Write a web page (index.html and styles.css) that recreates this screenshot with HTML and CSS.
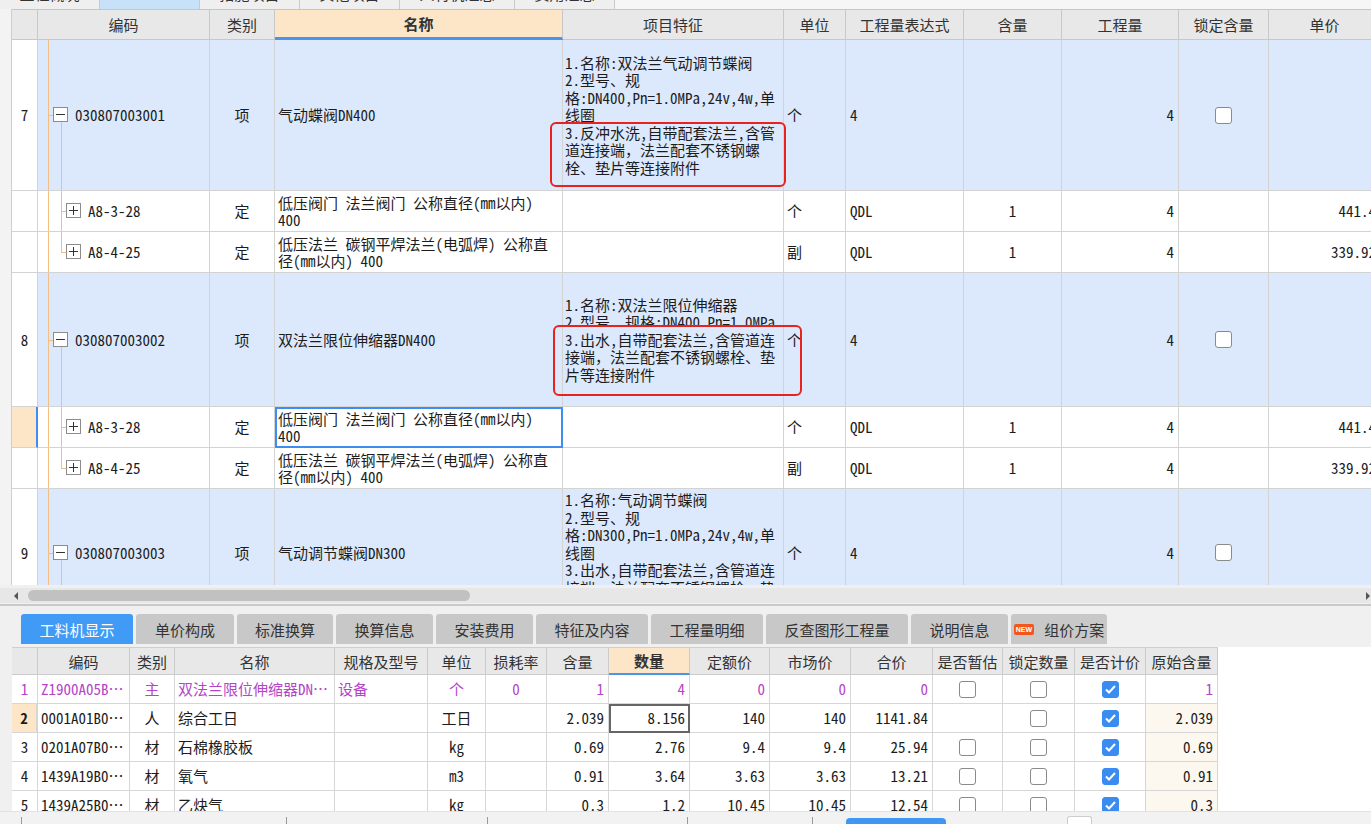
FILE: index.html
```html
<!DOCTYPE html>
<html lang="zh-CN">
<head>
<meta charset="utf-8">
<title>分部分项</title>
<link rel="stylesheet" href="styles.css">
</head>
<body>
<div class="toptabs">
  <div class="ttab"><span>工程概况</span></div>
  <div class="ttab on"><span>分部分项</span></div>
  <div class="ttab"><span>措施项目</span></div>
  <div class="ttab"><span>其他项目</span></div>
  <div class="ttab w115"><span>人材机汇总</span></div>
  <div class="ttab"><span>费用汇总</span></div>
</div>

<div class="upper">
  <div class="side"></div>
  <div class="grid">
    <div class="row head">
      <div class="c"></div>
      <div class="c">编码</div>
      <div class="c">类别</div>
      <div class="c hl-col">名称</div>
      <div class="c">项目特征</div>
      <div class="c">单位</div>
      <div class="c">工程量表达式</div>
      <div class="c">含量</div>
      <div class="c">工程量</div>
      <div class="c">锁定含量</div>
      <div class="c">单价</div>
    </div>

    <div class="row d item h151">
      <div class="c rn">7</div>
      <div class="c code"><i class="vl"></i><i class="hz"></i><i class="bx"></i><i class="vk down"></i>030807003001</div>
      <div class="c ctr">项</div>
      <div class="c">气动蝶阀DN400</div>
      <div class="c ft"><div>1.名称:双法兰气动调节蝶阀<br>2.型号、规<br>格:DN400,Pn=1.0MPa,24v,4w,单<br>线圈<br>3.反冲水洗,自带配套法兰,含管<br>道连接端，法兰配套不锈钢螺<br>栓、垫片等连接附件</div></div>
      <div class="c">个</div>
      <div class="c px">4</div>
      <div class="c"></div>
      <div class="c rt">4</div>
      <div class="c ctr"><span class="cb"></span></div>
      <div class="c"></div>
    </div>

    <div class="row d sub h41">
      <div class="c rn"></div>
      <div class="c code"><i class="vl"></i><i class="vk full"></i><i class="hz"></i><i class="bx plus"></i>A8-3-28</div>
      <div class="c ctr">定</div>
      <div class="c"><div>低压阀门 法兰阀门 公称直径(mm以内)<br>400</div></div>
      <div class="c"></div>
      <div class="c">个</div>
      <div class="c px">QDL</div>
      <div class="c ctr">1</div>
      <div class="c rt">4</div>
      <div class="c"></div>
      <div class="c rt">441.4</div>
    </div>

    <div class="row d sub h41">
      <div class="c rn"></div>
      <div class="c code"><i class="vl"></i><i class="vk half"></i><i class="hz"></i><i class="bx plus"></i>A8-4-25</div>
      <div class="c ctr">定</div>
      <div class="c"><div>低压法兰 碳钢平焊法兰(电弧焊) 公称直<br>径(mm以内) 400</div></div>
      <div class="c"></div>
      <div class="c">副</div>
      <div class="c px">QDL</div>
      <div class="c ctr">1</div>
      <div class="c rt">4</div>
      <div class="c"></div>
      <div class="c rt">339.92</div>
    </div>

    <div class="row d item h134">
      <div class="c rn">8</div>
      <div class="c code"><i class="vl"></i><i class="hz"></i><i class="bx"></i><i class="vk down"></i>030807003002</div>
      <div class="c ctr">项</div>
      <div class="c">双法兰限位伸缩器DN400</div>
      <div class="c ft"><div>1.名称:双法兰限位伸缩器<div class="clip">2.型号、规格:DN400,Pn=1.0MPa</div>3.出水,自带配套法兰,含管道连<br>接端，法兰配套不锈钢螺栓、垫<br>片等连接附件</div></div>
      <div class="c">个</div>
      <div class="c px">4</div>
      <div class="c"></div>
      <div class="c rt">4</div>
      <div class="c ctr"><span class="cb"></span></div>
      <div class="c"></div>
    </div>

    <div class="row d sub h41">
      <div class="c rn sel"></div>
      <div class="c code"><i class="vl"></i><i class="vk full"></i><i class="hz"></i><i class="bx plus"></i>A8-3-28</div>
      <div class="c ctr">定</div>
      <div class="c cur"><div>低压阀门 法兰阀门 公称直径(mm以内)<br>400</div></div>
      <div class="c"></div>
      <div class="c">个</div>
      <div class="c px">QDL</div>
      <div class="c ctr">1</div>
      <div class="c rt">4</div>
      <div class="c"></div>
      <div class="c rt">441.4</div>
    </div>

    <div class="row d sub h41">
      <div class="c rn"></div>
      <div class="c code"><i class="vl"></i><i class="vk half"></i><i class="hz"></i><i class="bx plus"></i>A8-4-25</div>
      <div class="c ctr">定</div>
      <div class="c"><div>低压法兰 碳钢平焊法兰(电弧焊) 公称直<br>径(mm以内) 400</div></div>
      <div class="c"></div>
      <div class="c">副</div>
      <div class="c px">QDL</div>
      <div class="c ctr">1</div>
      <div class="c rt">4</div>
      <div class="c"></div>
      <div class="c rt">339.92</div>
    </div>

    <div class="row d item h128">
      <div class="c rn">9</div>
      <div class="c code"><i class="vl"></i><i class="hz"></i><i class="bx"></i><i class="vk down"></i>030807003003</div>
      <div class="c ctr">项</div>
      <div class="c">气动调节蝶阀DN300</div>
      <div class="c ft"><div>1.名称:气动调节蝶阀<br>2.型号、规<br>格:DN300,Pn=1.0MPa,24v,4w,单<br>线圈<br>3.出水,自带配套法兰,含管道连<br>接端，法兰配套不锈钢螺栓、垫<br>片等连接附件</div></div>
      <div class="c">个</div>
      <div class="c px">4</div>
      <div class="c"></div>
      <div class="c rt">4</div>
      <div class="c ctr"><span class="cb"></span></div>
      <div class="c"></div>
    </div>

    <div class="rbox rb1"></div>
    <div class="rbox rb2"></div>
  </div>
</div>

<div class="hscroll">
  <div class="track">
    <span class="arr-l"></span>
    <span class="thumb"></span>
    <span class="arr-r"></span>
  </div>
</div>

<div class="lower">
  <div class="btabs">
    <div class="bt on w112">工料机显示</div>
    <div class="bt w98">单价构成</div>
    <div class="bt w96">标准换算</div>
    <div class="bt w97">换算信息</div>
    <div class="bt w97">安装费用</div>
    <div class="bt w112">特征及内容</div>
    <div class="bt w112">工程量明细</div>
    <div class="bt w142">反查图形工程量</div>
    <div class="bt w97">说明信息</div>
    <div class="bt w96"><span class="new">NEW</span>组价方案</div>
  </div>

  <div class="bwrap">
    <div class="bside"></div>
    <div class="btable">
      <div class="brow bhead">
        <div class="c"></div>
        <div class="c">编码</div>
        <div class="c">类别</div>
        <div class="c">名称</div>
        <div class="c">规格及型号</div>
        <div class="c">单位</div>
        <div class="c">损耗率</div>
        <div class="c">含量</div>
        <div class="c hl-col">数量</div>
        <div class="c">定额价</div>
        <div class="c">市场价</div>
        <div class="c">合价</div>
        <div class="c">是否暂估</div>
        <div class="c">锁定数量</div>
        <div class="c">是否计价</div>
        <div class="c">原始含量</div>
      </div>

      <div class="brow d main">
        <div class="c rn">1</div>
        <div class="c">Z1900A05B…</div>
        <div class="c ctr">主</div>
        <div class="c">双法兰限位伸缩器DN…</div>
        <div class="c">设备</div>
        <div class="c ctr">个</div>
        <div class="c ctr">0</div>
        <div class="c rt">1</div>
        <div class="c rt">4</div>
        <div class="c rt">0</div>
        <div class="c rt">0</div>
        <div class="c rt">0</div>
        <div class="c ctr"><span class="cb"></span></div>
        <div class="c ctr"><span class="cb"></span></div>
        <div class="c ctr"><span class="cb on"><svg viewBox="0 0 15 15" width="15" height="15"><path d="M3 7.5l3 3 6-6.5" fill="none" stroke="#fff" stroke-width="2"/></svg></span></div>
        <div class="c rt">1</div>
      </div>

      <div class="brow d">
        <div class="c rn sel">2</div>
        <div class="c">0001A01B0…</div>
        <div class="c ctr">人</div>
        <div class="c">综合工日</div>
        <div class="c"></div>
        <div class="c ctr">工日</div>
        <div class="c"></div>
        <div class="c rt">2.039</div>
        <div class="c rt cursel">8.156</div>
        <div class="c rt">140</div>
        <div class="c rt">140</div>
        <div class="c rt">1141.84</div>
        <div class="c ctr"></div>
        <div class="c ctr"><span class="cb"></span></div>
        <div class="c ctr"><span class="cb on"><svg viewBox="0 0 15 15" width="15" height="15"><path d="M3 7.5l3 3 6-6.5" fill="none" stroke="#fff" stroke-width="2"/></svg></span></div>
        <div class="c rt cream">2.039</div>
      </div>

      <div class="brow d">
        <div class="c rn">3</div>
        <div class="c">0201A07B0…</div>
        <div class="c ctr">材</div>
        <div class="c">石棉橡胶板</div>
        <div class="c"></div>
        <div class="c ctr">kg</div>
        <div class="c"></div>
        <div class="c rt">0.69</div>
        <div class="c rt">2.76</div>
        <div class="c rt">9.4</div>
        <div class="c rt">9.4</div>
        <div class="c rt">25.94</div>
        <div class="c ctr"><span class="cb"></span></div>
        <div class="c ctr"><span class="cb"></span></div>
        <div class="c ctr"><span class="cb on"><svg viewBox="0 0 15 15" width="15" height="15"><path d="M3 7.5l3 3 6-6.5" fill="none" stroke="#fff" stroke-width="2"/></svg></span></div>
        <div class="c rt cream">0.69</div>
      </div>

      <div class="brow d">
        <div class="c rn">4</div>
        <div class="c">1439A19B0…</div>
        <div class="c ctr">材</div>
        <div class="c">氧气</div>
        <div class="c"></div>
        <div class="c ctr">m3</div>
        <div class="c"></div>
        <div class="c rt">0.91</div>
        <div class="c rt">3.64</div>
        <div class="c rt">3.63</div>
        <div class="c rt">3.63</div>
        <div class="c rt">13.21</div>
        <div class="c ctr"><span class="cb"></span></div>
        <div class="c ctr"><span class="cb"></span></div>
        <div class="c ctr"><span class="cb on"><svg viewBox="0 0 15 15" width="15" height="15"><path d="M3 7.5l3 3 6-6.5" fill="none" stroke="#fff" stroke-width="2"/></svg></span></div>
        <div class="c rt cream">0.91</div>
      </div>

      <div class="brow d">
        <div class="c rn">5</div>
        <div class="c">1439A25B0…</div>
        <div class="c ctr">材</div>
        <div class="c">乙炔气</div>
        <div class="c"></div>
        <div class="c ctr">kg</div>
        <div class="c"></div>
        <div class="c rt">0.3</div>
        <div class="c rt">1.2</div>
        <div class="c rt">10.45</div>
        <div class="c rt">10.45</div>
        <div class="c rt">12.54</div>
        <div class="c ctr"><span class="cb"></span></div>
        <div class="c ctr"><span class="cb"></span></div>
        <div class="c ctr"><span class="cb on"><svg viewBox="0 0 15 15" width="15" height="15"><path d="M3 7.5l3 3 6-6.5" fill="none" stroke="#fff" stroke-width="2"/></svg></span></div>
        <div class="c rt cream">0.3</div>
      </div>
    </div>
  </div>

  <div class="status">
    <span class="sp s1"></span>
    <span class="sp s2"></span>
    <span class="sp s3"></span>
    <span class="sp s4"></span>
    <span class="sp s5"></span>
    <span class="pill"></span>
    <span class="wb"></span>
  </div>
</div>
</body>
</html>
```

FILE: styles.css
```css
* { box-sizing: border-box; margin: 0; padding: 0; }
html, body { width: 1371px; height: 824px; overflow: hidden; }
body {
  background: #f0f0f0;
  font-family: "Noto Sans CJK SC", "Noto Sans", sans-serif;
  color: #222;
}

/* top tab strip (mostly scrolled out of view) */
.toptabs { height: 9px; display: flex; overflow: hidden; background: #f6f6f6; }
.ttab {
  flex: none; width: 100px; height: 9px; overflow: hidden;
  border-right: 1px solid #c9c9c9; background: #efefef;
  font-size: 15px; line-height: 20px; text-align: center; color: #333;
}
.ttab span { display: block; margin-top: -16px; }
.ttab.w115 { width: 115px; }
.ttab.on { background: #c7e2f8; }
.ttab.on span { margin-top: -22px; }

/* upper grid */
.upper { display: flex; height: 576px; }
.side { width: 12px; flex: none; background: #f3f3f3; border-right: 1px solid #cfcfcf; }
.grid { flex: 1; min-width: 0; overflow: hidden; position: relative; background: #f0f0f0; }

.row {
  display: grid;
  grid-template-columns: 26px 172px 65px 288px 221px 62px 118px 98px 117px 90px 112px;
  width: 1369px;
}
.c {
  display: flex; align-items: center; min-width: 0;
  border-right: 1px solid #d3d3d3; border-bottom: 1px solid #d3d3d3;
  padding: 0 3px; overflow: hidden; white-space: nowrap;
}
.head { height: 31px; border-top: 1px solid #c6c6c6; background: #e8e8e8; }
.head .c { justify-content: center; font-size: 15px; color: #333; border-color: #c8c8c8; }
.hl-col { background: #fde6c8; font-weight: bold; border-bottom: 3px solid #4a94ec !important; }

.d {
  font-family: "Noto Sans Mono CJK SC", "Noto Sans CJK SC", monospace;
  font-size: 15px; line-height: 17.5px; color: #1c1c1c;
}
.item { background: #dce9fc; }
.sub { background: #fff; }
.h151 { height: 151px; }
.h134 { height: 134px; }
.h128 { height: 128px; }
.h41 { height: 41px; }

.rn { justify-content: center; background: #fff; padding: 0; }
.rn.sel { background: #fde6c8; border-right: 2px solid #3d8ef0; font-weight: bold; }
.ctr { justify-content: center; }
.rt { justify-content: flex-end; padding-right: 4px; }
.px { padding-left: 4px; }
.ft { padding-left: 2px; }
.clip { height: 13px; overflow: hidden; margin-bottom: 4.5px; }
.cur { outline: 2px solid #3d8ef0; outline-offset: -2px; }

/* tree lines */
.code { position: relative; padding-left: 37px; }
.sub .code { padding-left: 50px; }
.code i { position: absolute; display: block; }
.vl { left: 10px; top: 0; bottom: 0; width: 1px; background: #f4bd82; }
.hz { left: 10px; top: 50%; width: 5px; height: 1px; background: #f4bd82; }
.sub .hz { left: 23px; }
.bx { left: 15px; top: 50%; margin-top: -8px; width: 15px; height: 15px; border: 1px solid #8c8c8c; background: #fff; }
.sub .bx { left: 28px; }
.bx::before { content: ""; position: absolute; left: 2px; right: 2px; top: 6px; height: 1px; background: #333; }
.bx.plus::after { content: ""; position: absolute; top: 2px; bottom: 2px; left: 6px; width: 1px; background: #333; }
.vk { left: 23px; width: 1px; background: #f4bd82; }
.vk.down { top: calc(50% + 7px); bottom: 0; }
.vk.full { top: 0; bottom: 0; }
.vk.half { top: 0; height: 50%; }

/* checkboxes */
.cb {
  display: block; width: 17px; height: 17px;
  border: 1px solid #8a8a8a; border-radius: 3px; background: #fff;
}
.cb.on { background: #3b8cf0; border-color: #3b8cf0; }
.cb svg { display: block; }

/* red annotation boxes */
.rbox { position: absolute; border: 2.5px solid #e8221d; border-radius: 6px; }
.rb1 { left: 538px; top: 113px; width: 236px; height: 65px; }
.rb2 { left: 541px; top: 316px; width: 249px; height: 71px; }

/* horizontal scrollbar */
.hscroll { height: 19px; padding-top: 3px; background: #f0f0f0; }
.track { height: 15px; background: #e7e7e7; display: flex; align-items: center; }
.arr-l { width: 0; height: 0; margin-left: 14px; border-top: 4px solid transparent; border-bottom: 4px solid transparent; border-right: 4px solid #555; }
.thumb { width: 442px; height: 11px; margin-left: 10px; border-radius: 6px; background: #c1c1c1; }
.arr-r { width: 0; height: 0; margin-left: auto; margin-right: 1px; border-top: 4px solid transparent; border-bottom: 4px solid transparent; border-left: 4px solid #555; }

/* lower panel */
.lower { height: 220px; border-top: 2px solid #c9c9c9; background: #f0f0f0; }
.btabs { display: flex; gap: 3px; padding-left: 21px; margin-top: 8px; height: 30px; }
.bt {
  flex: none; height: 30px; background: #c8c8c8; border-radius: 3px 3px 0 0;
  display: flex; align-items: center; justify-content: center;
  font-size: 15px; color: #333;
}
.bt.on { background: #3f9bf5; color: #fff; }
.w96 { width: 96px; } .w97 { width: 97px; } .w98 { width: 98px; }
.w112 { width: 112px; } .w142 { width: 142px; }
.new {
  background: #f0561d; color: #fff; border-radius: 2px;
  font: bold 7px/11px "Liberation Sans", sans-serif; padding: 0 2px; margin-right: 10px;
}

.bwrap { display: flex; margin-top: 3px; height: 164px; }
.bside { width: 12px; flex: none; background: #f0f0f0; }
.btable { flex: 1; min-width: 0; background: #fff; overflow: hidden; }
.brow {
  display: grid;
  grid-template-columns: 26px 92px 45px 160px 93px 58px 61px 62px 81px 80px 81px 82px 70px 72px 71px 72px;
  width: 1206px; height: 29px;
}
.brow .c { border-color: #d6d6d6; }
.bhead { height: 28px; background: #e8e8e8; border-top: 1px solid #cfcfcf; }
.bhead .c { justify-content: center; font-size: 15px; color: #333; border-color: #cbcbcb; }
.bhead .hl-col { border-bottom: 2px solid #4a94ec !important; }
.main { color: #b445c9; }
.cream { background: #fdf8ef; }
.cursel { outline: 2px solid #666; outline-offset: -2px; }

/* status strip */
.status { height: 13px; display: flex; align-items: flex-end; background: #f2f2f2; border-top: 1px solid #e2e2e2; }
.sp { width: 1px; height: 7px; background: #999; }
.s1 { margin-left: 21px; }
.s2 { margin-left: 264px; }
.s3 { margin-left: 200px; }
.s4 { margin-left: 199px; }
.s5 { margin-left: 124px; }
.pill { width: 100px; height: 6px; margin-left: 33px; background: #4096f0; border-radius: 4px 4px 0 0; }
.wb { width: 25px; height: 8px; margin-left: 121px; background: #fff; border: 1px solid #ccc; border-bottom: none; border-radius: 3px 3px 0 0; }
```
